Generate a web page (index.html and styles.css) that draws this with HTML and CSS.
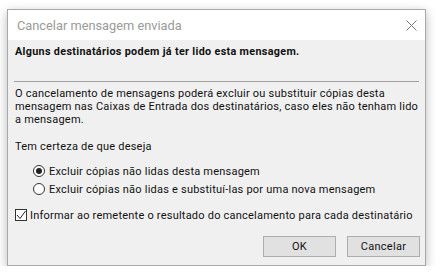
FILE: index.html
```html
<!DOCTYPE html>
<html lang="pt">
<head>
    <meta charset="UTF-8">
    <title>Cancelar mensagem enviada</title>
    <link rel="stylesheet" href="styles.css">
</head>
<body>
    <div class="dialog">
        <div class="title-bar">
            <span class="title">Cancelar mensagem enviada</span>
            <svg class="close" width="11" height="11" viewBox="0 0 11 11">
                <path d="M0.5 0.5 L10.5 10.5 M10.5 0.5 L0.5 10.5" stroke="#7a7a7a" stroke-width="1" fill="none"/>
            </svg>
        </div>
        <div class="content">
            <div class="warning">Alguns destinatários podem já ter lido esta mensagem.</div>
            <div class="separator"></div>
            <p class="info">O cancelamento de mensagens poderá excluir ou substituir cópias desta<br>mensagem nas Caixas de Entrada dos destinatários, caso eles não tenham lido<br>a mensagem.</p>
            <p class="question">Tem certeza de que deseja</p>
            <div class="options">
                <label class="radio-row">
                    <span class="radio checked"></span>
                    <span>Excluir cópias não lidas desta mensagem</span>
                </label>
                <label class="radio-row">
                    <span class="radio"></span>
                    <span>Excluir cópias não lidas e substituí-las por uma nova mensagem</span>
                </label>
            </div>
            <label class="check-row">
                <span class="checkbox">
                    <svg width="10" height="10" viewBox="0 0 10 10">
                        <path d="M1 5 L4 8.5 L9.5 1" stroke="#222" stroke-width="1" fill="none"/>
                    </svg>
                </span>
                <span>Informar ao remetente o resultado do cancelamento para cada destinatário</span>
            </label>
            <div class="buttons">
                <button class="btn">OK</button>
                <button class="btn">Cancelar</button>
            </div>
        </div>
    </div>
</body>
</html>
```

FILE: styles.css
```css
body {
    margin: 0;
    padding: 9px 0 0 7px;
    background-color: #fff;
    font-family: Roboto, "Noto Sans", sans-serif;
    font-size: 11px;
    color: #111;
}
.dialog {
    width: 419px;
    height: 257px;
    box-sizing: border-box;
    border: 1px solid #a9a9a9;
    box-shadow: 0 3px 10px rgba(0, 0, 0, 0.28);
    display: flex;
    flex-direction: column;
}
.title-bar {
    height: 30px;
    background-color: #fff;
    display: flex;
    align-items: center;
    justify-content: space-between;
    padding: 0 8px 0 9px;
}
.title {
    font-size: 12.8px;
    color: #9a9a9a;
}
.close {
    display: block;
}
.content {
    flex: 1;
    background-color: #f0f0f0;
    padding: 0 7px;
    white-space: nowrap;
    letter-spacing: 0.22px;
}
.warning {
    margin-top: 5px;
    line-height: 14px;
    font-size: 10.8px;
    font-weight: bold;
    letter-spacing: 0.32px;
}
.separator {
    margin: 22px -1px 0;
    height: 1px;
    background-color: #a0a0a0;
}
.info {
    margin: 5px 0 0;
    line-height: 13px;
}
.question {
    margin: 14px 0 0;
    line-height: 13px;
}
.options {
    margin: 9px 0 0 18px;
}
.radio-row,
.check-row {
    display: flex;
    align-items: center;
    gap: 4px;
    height: 18px;
}
.radio {
    width: 12px;
    height: 12px;
    box-sizing: border-box;
    border: 1px solid #333;
    border-radius: 50%;
    background-color: #fff;
    display: flex;
    align-items: center;
    justify-content: center;
}
.radio.checked::after {
    content: '';
    width: 6px;
    height: 6px;
    border-radius: 50%;
    background-color: #222;
}
.check-row {
    margin-top: 8px;
    gap: 3px;
}
.checkbox {
    width: 12px;
    height: 12px;
    box-sizing: border-box;
    border: 1px solid #333;
    background-color: #fff;
    display: flex;
    align-items: center;
    justify-content: center;
}
.checkbox svg {
    display: block;
}
.buttons {
    display: flex;
    justify-content: flex-end;
    gap: 11px;
    margin: 12px -2px 0 0;
}
.btn {
    width: 73px;
    height: 21px;
    background-color: #e1e1e1;
    border: 1px solid #adadad;
    font-family: inherit;
    font-size: 11px;
    letter-spacing: 0.3px;
    color: #111;
    padding: 0;
}
```
